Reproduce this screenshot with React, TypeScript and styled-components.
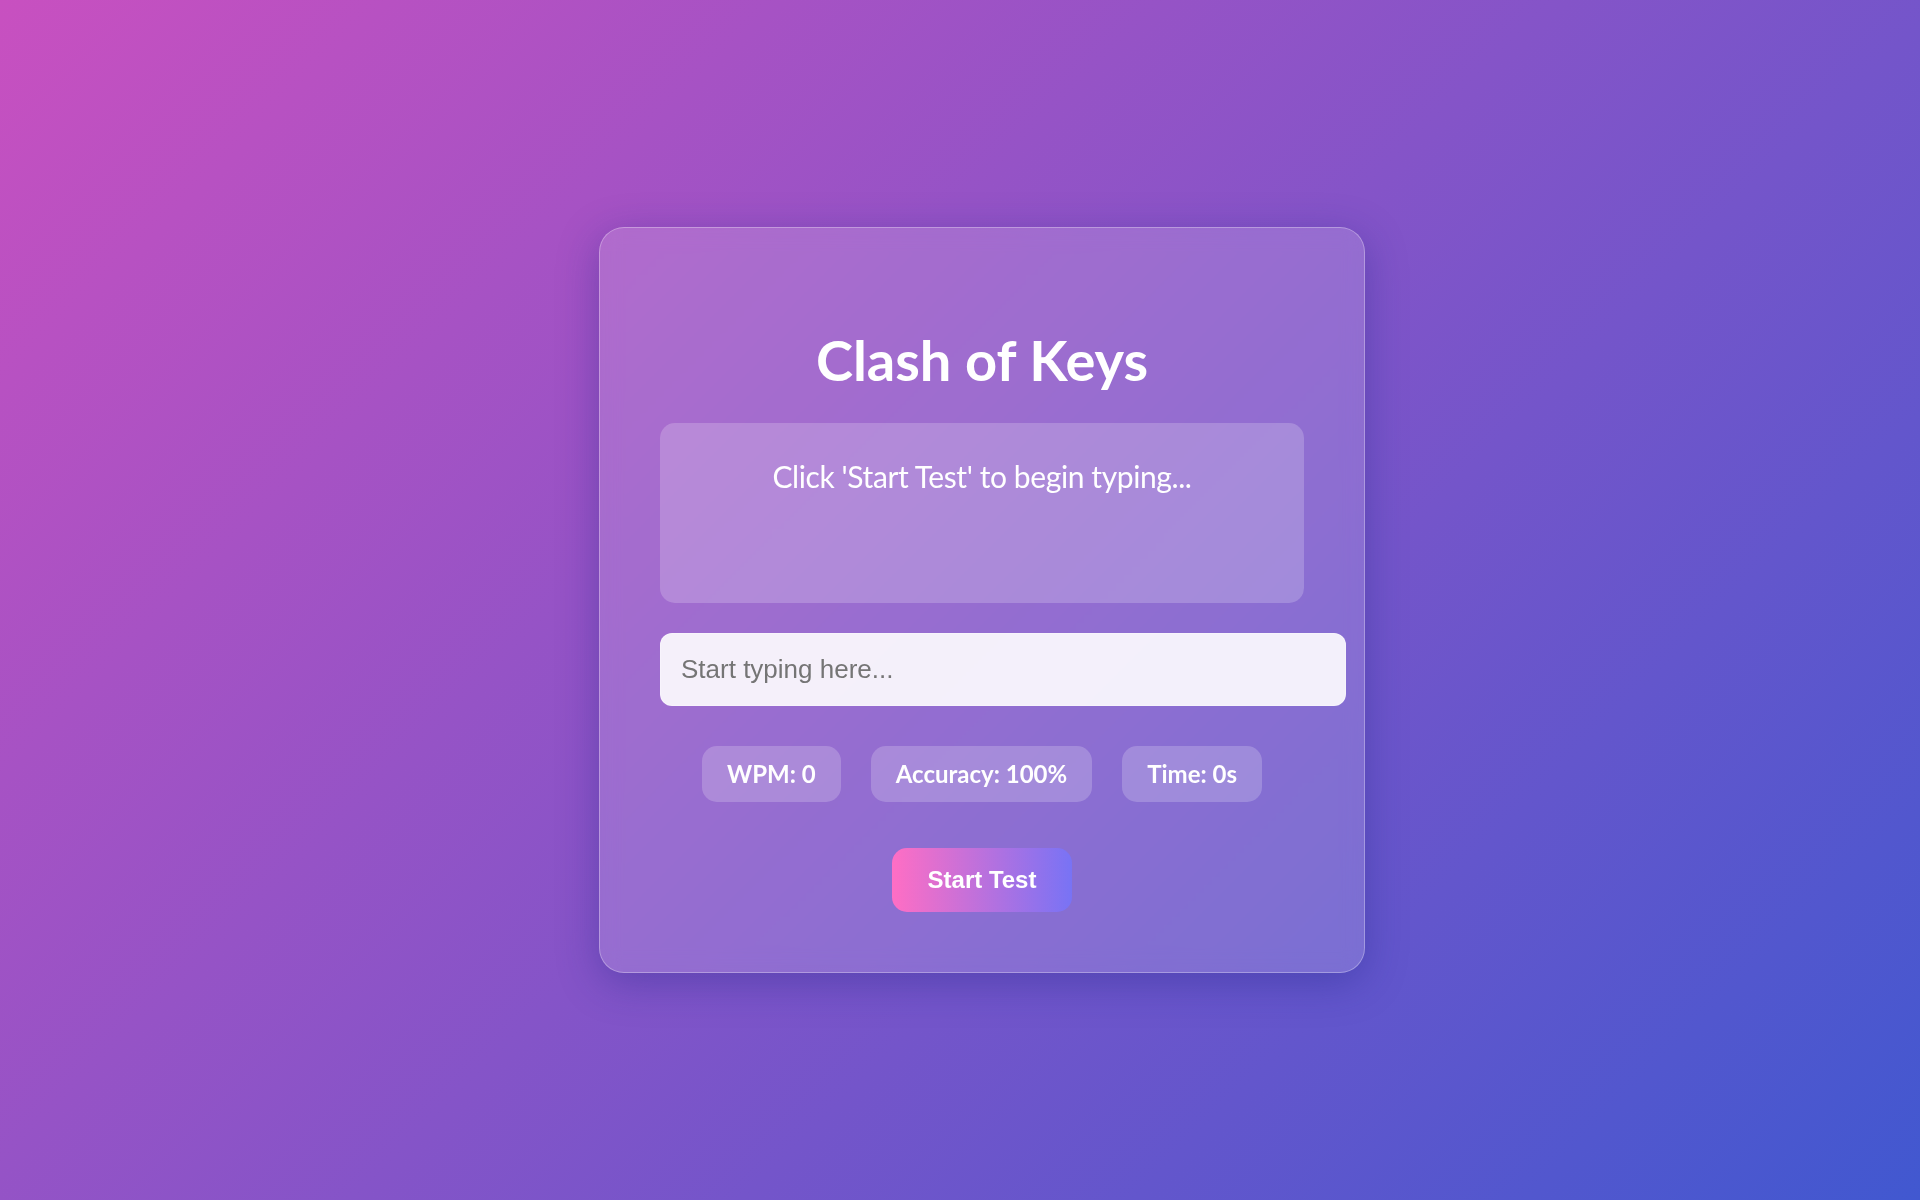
import React from "react";
import styled, { createGlobalStyle } from "styled-components";

const GlobalStyle = createGlobalStyle`
  html, body {
    margin: 0;
    padding: 0;
  }
  body {
    min-height: 100vh;
    background: linear-gradient(135deg, #c850c0 0%, #4158d0 100%);
    font-family: Lato, "Open Sans", sans-serif;
    color: #ffffff;
  }
`;

const Page = styled.main`
  min-height: 100vh;
  box-sizing: border-box;
  padding-left: 44px;
  display: flex;
  align-items: center;
  justify-content: center;
`;

const Card = styled.section`
  width: 644px;
  padding: 60px;
  display: flex;
  flex-direction: column;
  align-items: stretch;
  border-radius: 25px;
  background: rgba(255, 255, 255, 0.15);
  backdrop-filter: blur(10px);
  border: 1px solid rgba(255, 255, 255, 0.3);
  box-shadow: 0 10px 40px rgba(31, 38, 135, 0.37);
`;

const Title = styled.h1`
  margin: 38px 0 29px;
  font-size: 56px;
  line-height: 1.2;
  font-weight: 700;
  text-align: center;
  color: #ffffff;
`;

const QuoteBox = styled.div`
  box-sizing: border-box;
  height: 180px;
  padding: 29px 30px;
  border-radius: 15px;
  background: rgba(255, 255, 255, 0.2);
  font-size: 30px;
  line-height: 1.6;
  letter-spacing: -0.4px;
  text-align: center;
  color: #ffffff;
`;

const TypingInput = styled.input`
  align-self: flex-start;
  box-sizing: content-box;
  width: 100%;
  margin-top: 30px;
  padding: 20px;
  border: 1px solid rgba(255, 255, 255, 0.3);
  border-radius: 12px;
  background: rgba(255, 255, 255, 0.9);
  font-family: "Liberation Sans", Arial, sans-serif;
  font-size: 26px;
  color: #333333;
  outline: none;

  &::placeholder {
    color: #757575;
  }
`;

const Stats = styled.div`
  margin-top: 40px;
  display: flex;
  justify-content: center;
  gap: 30px;
`;

const Stat = styled.div`
  padding: 12px 25px;
  border-radius: 15px;
  background: rgba(255, 255, 255, 0.2);
  font-size: 24px;
  line-height: 32px;
  font-weight: 700;
  color: #ffffff;
`;

const StartButton = styled.button`
  align-self: center;
  margin-top: 46px;
  padding: 18px 36px;
  border: none;
  border-radius: 15px;
  background: linear-gradient(90deg, #ff6ec4 0%, #7873f5 100%);
  font-family: "Liberation Sans", Arial, sans-serif;
  font-size: 24px;
  font-weight: 700;
  color: #ffffff;
  cursor: pointer;
`;

export default function App() {
  return (
    <>
      <GlobalStyle />
      <Page>
        <Card>
          <Title>Clash of Keys</Title>
          <QuoteBox>Click 'Start Test' to begin typing...</QuoteBox>
          <TypingInput type="text" placeholder="Start typing here..." />
          <Stats>
            <Stat>WPM: 0</Stat>
            <Stat>Accuracy: 100%</Stat>
            <Stat>Time: 0s</Stat>
          </Stats>
          <StartButton>Start Test</StartButton>
        </Card>
      </Page>
    </>
  );
}
